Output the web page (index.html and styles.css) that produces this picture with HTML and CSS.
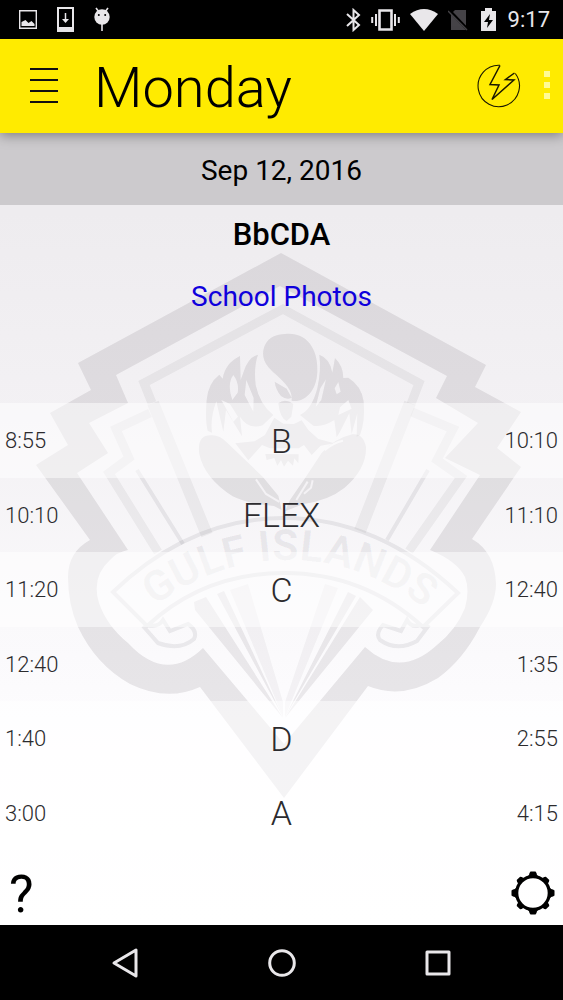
FILE: index.html
```
<!DOCTYPE html>
<html lang="en">
<head>
    <meta charset="UTF-8">
    <meta name="viewport" content="width=device-width, initial-scale=1.0">
    <title>Monday</title>
    <link rel="stylesheet" href="styles.css">
</head>
<body>
    <div class="status-bar">
        <div class="status-left">
            <svg width="18" height="19" viewBox="0 0 18 19"><path d="M.7.7h16.6v17.6H.7z" fill="none" stroke="#e9e7ea" stroke-width="1.4"/><path d="M2.500 16v-4l4-2 3 3 3-2 3 3v2z" fill="#e9e7ea"/></svg>
            <svg width="17" height="25" viewBox="0 0 17 25"><path d="M1 1h15v23H1z" fill="none" stroke="#e9e7ea" stroke-width="2"/><path d="M1 20h15v4H1zM5 12h7l-3.500 4z" fill="#e9e7ea"/><path d="M8.500 6v8" stroke="#e9e7ea" stroke-width="1.500"/></svg>
            <svg width="16" height="25" viewBox="0 0 16 25"><circle cx="8" cy="10" r="7.700" fill="#e9e7ea"/><path d="M2 1l3 4M14 1l-3 4M8 17v7" stroke="#e9e7ea" stroke-width="1.600"/><circle cx="4.800" cy="8" r="1" fill="#000"/><circle cx="11.200" cy="8" r="1" fill="#000"/></svg>
        </div>
        <div class="status-right">
            <svg class="bluetooth" width="15" height="24" viewBox="0 0 15 24"><path d="M1 6l12 11-5.500 5V2L13 7 1 18" fill="none" stroke="#e9e7ea" stroke-width="2"/></svg>
            <svg class="vibrate" width="29" height="24" viewBox="0 0 29 24"><path d="M8.500 2.500h12v19h-12z" fill="none" stroke="#e9e7ea" stroke-width="2.600"/><path d="M5 6v12M1.200 9v6M24 6v12M27.800 9v6" stroke="#e9e7ea" stroke-width="2"/></svg>
            <svg class="wifi" width="28" height="22" viewBox="0 0 28 22"><path d="M0 5Q14-5 28 5L14 22z" fill="#e9e7ea"/></svg>
            <svg class="no-sim" width="21" height="22" viewBox="0 0 21 22"><path d="M7 1h11v20H3V5z" fill="#454347"/><path d="M1 1l20 21" stroke="#000" stroke-width="3"/><path d="M0 2l19 19" stroke="#454347" stroke-width="1.500"/></svg>
            <svg class="battery" width="15" height="24" viewBox="0 0 15 24"><path d="M0 3h4V0h7v3h4v20H0z" fill="#e9e7ea"/><path d="M9 6l-6 8h4l-1 6 6-8H8z" fill="#000"/></svg>
            <span class="clock">9:17</span>
        </div>
    </div>

    <header class="app-bar">
        <button class="icon-button menu" aria-label="Menu">
            <svg width="28" height="38" viewBox="0 0 28 38"><path d="M0 2h28M0 13h28M0 24h28M0 35h28" stroke="#111" stroke-width="2.200"/></svg>
        </button>
        <h1>Monday</h1>
        <button class="icon-button flash" aria-label="Today">
            <svg width="44" height="44" viewBox="0 0 44 44" fill="none" stroke="#1a1800"><path d="M23 1.300A20.700 20.700 0 1 0 38.300 9.500" stroke-width="1.100"/><path d="M23 1.500L13 20.500l9 .5-7 14.500L37 16l-8.500-.5L37.500 9" stroke-width="1.500"/></svg>
        </button>
        <button class="icon-button more" aria-label="More options">
            <svg width="6" height="30" viewBox="0 0 6 30" fill="#fffb96"><path d="M0 0h6v6H0zM0 11h6v6H0zM0 22h6v6H0z"/></svg>
        </button>
    </header>

    <main>
        <svg class="crest" viewBox="0 133 563 792" preserveAspectRatio="xMidYMin meet" aria-hidden="true">
            <!-- outer border -->
            <path class="dark" fill-rule="evenodd" d="M281 253L78 363l13 27-41 23 18 32-32 20 54 75Q68 552 68 577 68 604 78 627 96 665 130 684 167 702 200 687L284 798 368 686Q402 700 438 678 463 660 480 627 496 603 496 584 495 552 472 539L521 467 497 448 521 412 475 387 486 365z
                M280 286L447 376 436 398 478 423 445 458 480 475 430 550Q457 561 465 577 470 590 465 608 456 630 437 645 400 679 365 647L284 744 203 648Q166 684 128 643 107 626 99 603 91 577 110 560 117 552 128 550L77 473 108 453 89 423 128 403 116 375z"/>
            <!-- inner frame -->
            <path class="frame" d="M152 403l-8-20 139-74 136 74-8 21"/>
            <path class="frame column" d="M153 403l54 132M410 403l-50 128"/>
            <path class="frame" d="M150 413l-34 16 13 29-20 15 49 79M412 412l41 17-16 31 24 17-52 74"/>
            <path class="line" d="M137 470l46 74M428 470l-41 70"/>
            <!-- rays under the ribbon -->
            <path class="mid" d="M194 602l12-5 77 121-88-108zM217 594l7-3 59 126zM285 718l88-108-13-13zM285 717l71-121-8-4z"/>
            <path class="light" d="M230 590l18-6 35 118v15zM285 717v-15l40-118 13 4z"/>

            <!-- ribbon -->
            <path class="ribbon" d="M113 592Q190 518 284 518T458 593L423 627Q364 573 284 573T147 626zM147 625Q158 628 163 620L170 631 188 624Q198 631 194 639 180 651 158 643L143 626M420 625Q411 628 407 620L401 631 383 625Q375 634 380 640 397 652 417 641L429 625"/>
            <path id="motto" fill="none" d="M138 620Q205 561 286 560T442 622"/>
            <text class="motto"><textPath href="#motto" startOffset="50%" text-anchor="middle">GULF ISLANDS</textPath></text>

            <!-- eagle -->
            <g transform="translate(170 310) scale(.3333)">
                <path class="dark" d="M345 72C420 65 445 130 442 185 440 245 402 279 365 272 370 236 335 210 306 183 274 153 276 125 285 105 297 80 320 73 345 72zM314 215L350 236 365 263Q350 271 333 258 317 239 314 215z"/>
                <path class="dark" d="M264 134Q235 142 221 185L212 210 210 138Q165 160 158 206L148 194Q114 220 110 270 105 330 113 362L126 368Q120 325 139 274L160 365 168 300 216 379 210 320Q235 360 278 346L310 315Q270 285 257 225 251 170 264 134zM190 195Q208 218 203 248L187 270Q170 222 190 195zM229 210L251 264 250 305 224 255zM154 270L180 282 204 320 190 335z" fill-rule="evenodd"/>
                <path class="dark" d="M448 134Q480 145 487 188L495 144Q520 168 520 204L535 203Q575 228 581 274 586 335 570 375L560 380 562 310 545 372 538 310 510 365 500 382 493 330Q458 352 430 347L390 315Q425 300 442 235 454 180 448 134zM505 216L512 245 500 253 494 235zM468 208L454 270 437 291 451 235zM535 270L545 296 505 315 510 292z" fill-rule="evenodd"/>
                <path class="dark" d="M325 280Q345 264 370 282L364 320 350 333Q330 325 325 280zM313 323L340 341 372 342 395 331 415 360 445 387 493 400 452 407 425 435 402 405 386 415 300 415 276 405 235 451 196 400 254 394 285 375zM286 432L386 433 385 460 373 445 369 467 354 452 342 470 333 450 322 467 313 444 290 450z"/>
                <path class="dark" d="M124 376Q80 375 88 432 103 504 188 559 235 582 312 588L335 600 325 557 278 500 170 397Q149 375 124 376zM547 373Q580 370 588 411 590 477 523 534 475 572 400 582L345 604 360 570 407 502 455 429Q490 387 547 373z"/>
                <path class="gap" d="M258 508l30 44 40 24M413 515l-34 55M428 511l-5 22-21 18M464 421q27-24 55-29"/>
            </g>
        </svg>

        <div class="date">Sep 12, 2016</div>
        <h2>BbCDA</h2>
        <p class="event"><a href="#">School Photos</a></p>

        <table class="schedule">
            <tr><td class="start">8:55</td><td class="block">B</td><td class="end">10:10</td></tr>
            <tr><td class="start">10:10</td><td class="block">FLEX</td><td class="end">11:10</td></tr>
            <tr><td class="start">11:20</td><td class="block">C</td><td class="end">12:40</td></tr>
            <tr><td class="start">12:40</td><td class="block"></td><td class="end">1:35</td></tr>
            <tr><td class="start">1:40</td><td class="block">D</td><td class="end">2:55</td></tr>
            <tr><td class="start">3:00</td><td class="block">A</td><td class="end">4:15</td></tr>
        </table>

        <div class="tools">
            <button class="icon-button help" aria-label="Help">?</button>
            <button class="icon-button settings" aria-label="Settings">
                <svg width="44" height="44" viewBox="-22 -22 44 44">
                    <circle r="16.300" fill="none" stroke="#000" stroke-width="3.200"/>
                    <g id="teeth"><path id="tooth" d="M-5.500-16.500Q-3.500-18-3.500-20L-2.500-21.500H2.500L3.500-20Q3.500-18 5.500-16.500z"/><use href="#tooth" transform="rotate(90)"/><use href="#tooth" transform="rotate(180)"/><use href="#tooth" transform="rotate(270)"/></g>
                    <use href="#teeth" transform="rotate(45) scale(.96)"/>
                </svg>
            </button>
        </div>
    </main>

    <nav class="nav-bar">
        <button class="icon-button" aria-label="Back"><svg width="30" height="32" viewBox="0 0 30 32"><path d="M25 3v26L3 16z"/></svg></button>
        <button class="icon-button" aria-label="Home"><svg width="30" height="30" viewBox="0 0 30 30"><circle cx="15" cy="15" r="12.300"/></svg></button>
        <button class="icon-button" aria-label="Recent apps"><svg width="28" height="28" viewBox="0 0 28 28"><path d="M3 3h22v22H3z"/></svg></button>
    </nav>
</body>
</html>
```
FILE: styles.css
```
* {
    box-sizing: border-box;
}
body {
    display: flex;
    flex-direction: column;
    min-height: 100vh;
    margin: 0;
    font-family: Roboto, sans-serif;
    color: #000;
    background: #000;
}
svg {
    display: block;
}
.icon-button {
    display: flex;
    align-items: center;
    justify-content: center;
    padding: 0;
    border: none;
    background: none;
    font-family: inherit;
    color: inherit;
    cursor: pointer;
}

/* status bar */
.status-bar {
    display: flex;
    align-items: center;
    justify-content: space-between;
    height: 39px;
    padding: 0 13px 0 19px;
    background: #000;
}
.status-left,
.status-right {
    display: flex;
    align-items: center;
}
.status-left {
    gap: 20px;
}
.status-right {
    gap: 10px;
}
.battery {
    margin: 0 2px;
}
.clock {
    font-size: 22px;
    font-weight: 400;
    line-height: 41px;
    color: #e9e7ea;
}

/* yellow bar */
.app-bar {
    position: relative;
    z-index: 1;
    display: flex;
    align-items: center;
    height: 94px;
    padding: 0 13px 0 30px;
    background: #ffeb00;
    box-shadow: 0 2px 12px rgba(0, 0, 0, 0.4);
}
.app-bar h1 {
    flex: 1;
    margin: 0 0 0 36px;
    padding-top: 4px;
    font-size: 56px;
    font-weight: 300;
    line-height: 90px;
}
.more {
    margin-left: 23px;
}

/* page */
main {
    position: relative;
    display: flex;
    flex-direction: column;
    flex: 1;
    background: linear-gradient(#eeecef 10%, #f3f1f4 36%, #faf9fb 62%, #fefdff 78%, #fff);
}
main > * {
    position: relative;
}
main > .crest {
    position: absolute;
    top: 0;
    left: 0;
    width: 100%;
}
.dark {
    fill: rgba(20, 10, 25, 0.09);
}
.mid {
    fill: rgba(20, 10, 25, 0.08);
}
.light {
    fill: rgba(20, 10, 25, 0.04);
}
.frame {
    fill: none;
    stroke: rgba(20, 10, 25, 0.05);
    stroke-width: 9;
}
.column {
    stroke-width: 12;
}
.line,
.ribbon {
    fill: none;
    stroke: rgba(20, 10, 25, 0.07);
    stroke-width: 4;
}
.gap {
    fill: none;
    stroke: #f4f2f5;
    stroke-width: 6;
}
.motto {
    font-size: 43px;
    font-weight: 700;
    fill: rgba(20, 10, 25, 0.06);
}
.date {
    height: 72px;
    font-size: 28px;
    line-height: 75px;
    text-align: center;
    background: #cccacd;
}
h2 {
    margin: 0;
    font-size: 31px;
    font-weight: 500;
    line-height: 60px;
    text-align: center;
}
.event {
    flex: 1;
    margin: 0;
    font-size: 28px;
    line-height: 63px;
    text-align: center;
}
.event a {
    color: #0f00dc;
    text-decoration: none;
}

/* timetable */
.schedule {
    width: 100%;
    border-spacing: 0;
    table-layout: fixed;
    font-size: 22px;
    font-weight: 300;
    color: #2c2b2e;
}
.schedule tr {
    height: 74px;
}
.schedule tr:nth-child(odd) {
    height: 75px;
}
.schedule tr:nth-child(odd),
.schedule tr:last-child {
    background: rgba(255, 255, 255, 0.5);
}
.schedule td {
    padding: 0 5px;
}
.schedule .block {
    font-size: 34px;
    text-align: center;
}
.schedule .end {
    text-align: right;
}
.tools {
    display: flex;
    align-items: flex-end;
    justify-content: space-between;
    height: 75px;
    padding: 0 8px 0 9px;
}
.settings {
    padding-bottom: 10px;
}
.help {
    font-size: 52px;
    font-weight: 400;
    line-height: 60px;
}

/* navigation bar */
.nav-bar {
    display: flex;
    justify-content: center;
    height: 75px;
    background: #000;
}
.nav-bar .icon-button {
    width: 156px;
}
.nav-bar svg {
    fill: none;
    stroke: #e9e7ea;
    stroke-width: 3;
    stroke-linejoin: round;
}
```
